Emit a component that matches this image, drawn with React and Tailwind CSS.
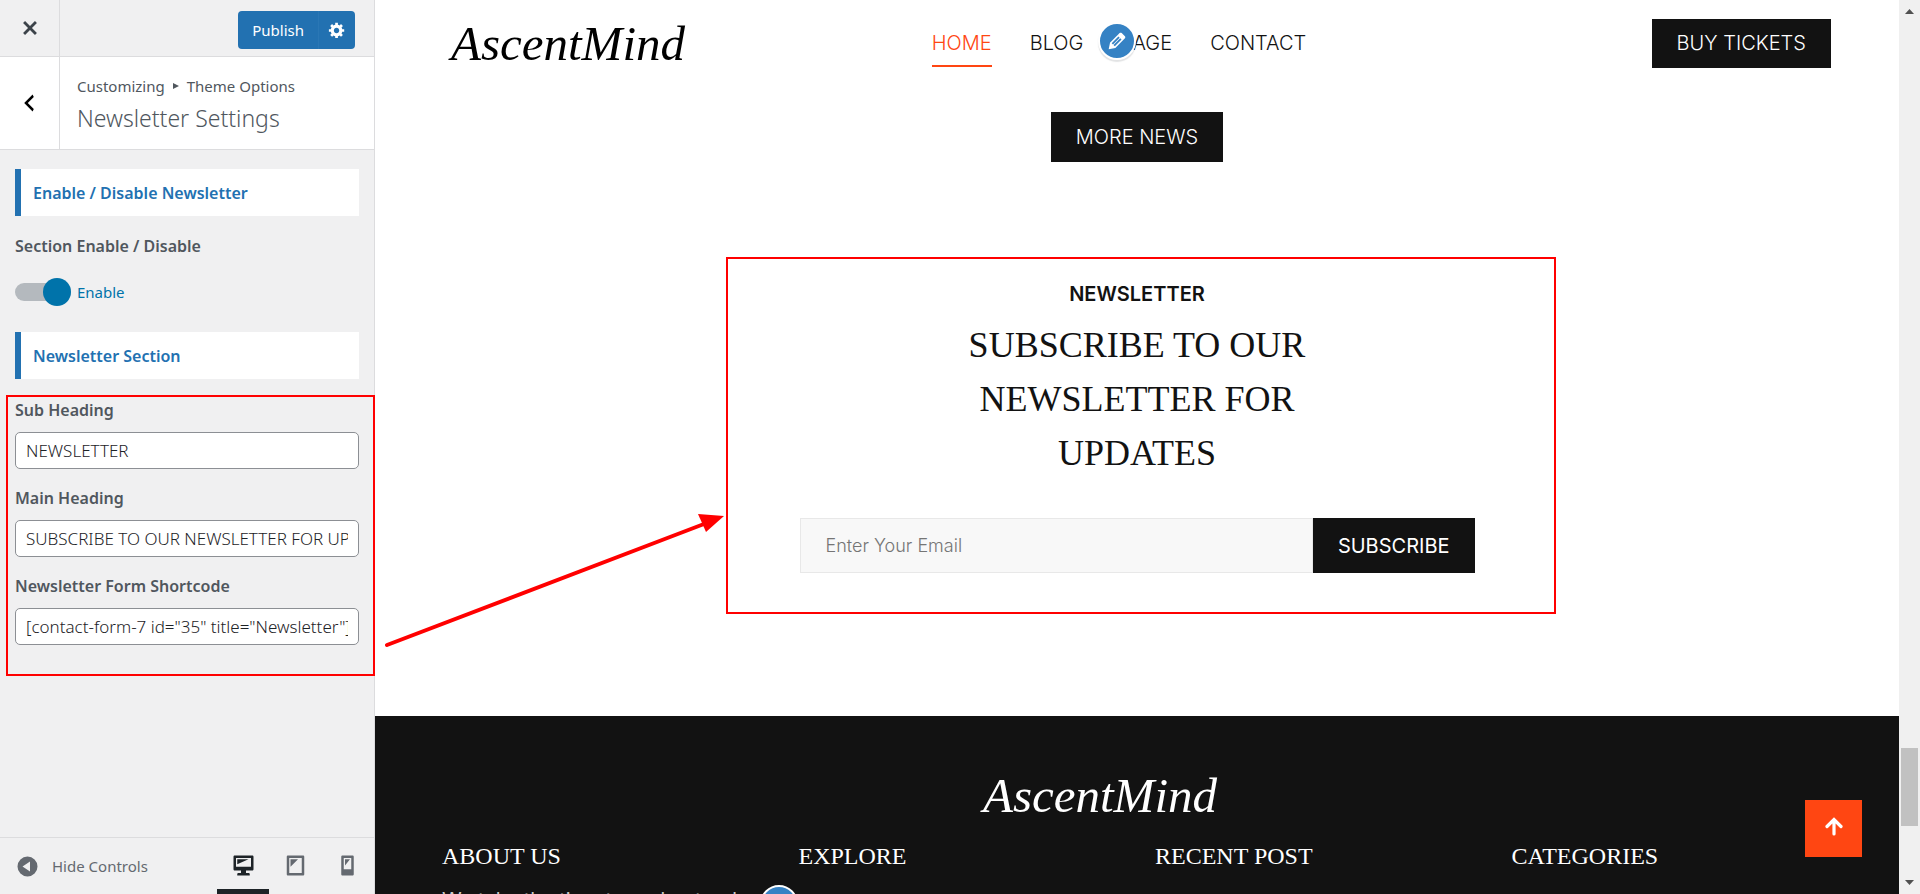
import { useState } from 'react'

const ICONS = {
  close: 'M14.95 6.46L11.41 10l3.54 3.54-1.41 1.41L10 11.42l-3.53 3.53-1.42-1.42L8.58 10 5.05 6.47l1.42-1.42L10 8.58l3.54-3.53z',
  back: 'M14 5l-5 5 5 5-1 2-7-7 7-7z',
  gear: 'M18 12h-2.18c-.17.7-.44 1.35-.81 1.93l1.54 1.54-2.1 2.1-1.54-1.54c-.58.36-1.23.63-1.91.79V19H8v-2.18c-.68-.16-1.33-.43-1.91-.79l-1.54 1.54-2.12-2.12 1.54-1.54c-.36-.58-.63-1.23-.79-1.91H1V9.03h2.17c.16-.7.44-1.35.8-1.94L2.43 5.55l2.1-2.1 1.54 1.54c.58-.37 1.24-.64 1.93-.81V2h3v2.18c.68.16 1.33.43 1.91.79l1.54-1.54 2.12 2.12-1.54 1.54c.36.59.64 1.24.8 1.94H18V12zm-8.5 1.5c1.66 0 3-1.34 3-3s-1.34-3-3-3-3 1.34-3 3 1.34 3 3 3z',
  edit: 'M13.89 3.39l2.71 2.72c.46.46.42 1.24.03 1.64l-8.01 8.02-5.56 1.16 1.16-5.58s7.6-7.63 7.99-8.03c.39-.39 1.22-.39 1.68.07zm-2.73 2.79l-5.59 5.61 1.11 1.11 5.54-5.65zm-2.97 8.23l5.58-5.6-1.07-1.08-5.59 5.6z',
  desktop: 'M3 2h14c.55 0 1 .45 1 1v10c0 .55-.45 1-1 1h-5v2h2c.55 0 1 .45 1 1v1H5v-1c0-.55.45-1 1-1h2v-2H3c-.55 0-1-.45-1-1V3c0-.55.45-1 1-1zm13 9V4H4v7h12zM5 5h9L5 9V5z',
  tablet: 'M4 2h12c.55 0 1 .45 1 1v14c0 .55-.45 1-1 1H4c-.55 0-1-.45-1-1V3c0-.55.45-1 1-1zm11 14V4H5v12h10zM6 5h6l-6 6z',
  mobile: 'M6 2h8c.55 0 1 .45 1 1v14c0 .55-.45 1-1 1H6c-.55 0-1-.45-1-1V3c0-.55.45-1 1-1zm7 11V4H7v9h6zM8 5h4l-4 5z',
  collapse: 'M10 2a8 8 0 1 0 0 16 8 8 0 0 0 0-16zm2 12L6 10l6-4z',
}

const NAV = ['HOME', 'BLOG', 'PAGE', 'CONTACT']
const DEVICES = ['desktop', 'tablet', 'mobile']
const FOOTER_COLUMNS = [
  { title: 'ABOUT US', text: 'We take the time to understand' },
  { title: 'EXPLORE' },
  { title: 'RECENT POST' },
  { title: 'CATEGORIES' },
]

function Icon({ name, className }) {
  return (
    <svg viewBox="0 0 20 20" fill="currentColor" aria-hidden="true" className={className}>
      <path fillRule="evenodd" d={ICONS[name]} />
    </svg>
  )
}

function SectionTitle({ children }) {
  return (
    <h3 className="flex h-[47px] items-center border-l-6 border-[#2271b1] bg-white px-3 text-base font-semibold text-[#2271b1]">
      {children}
    </h3>
  )
}

function Field({ id, label, value, onChange }) {
  return (
    <div className="mb-[15px]">
      <label htmlFor={id} className="mb-2 block text-base leading-7 font-semibold text-[#50575e]">
        {label}
      </label>
      <input
        id={id}
        type="text"
        value={value}
        onChange={(e) => onChange(e.target.value)}
        className="block h-[37px] w-full rounded-[5px] border border-[#8c8f94] bg-white px-2.5 text-[17px] font-light text-[#1d2327]"
      />
    </div>
  )
}

function EditShortcut({ label }) {
  return (
    <button
      aria-label={label}
      className="flex size-[38px] items-center justify-center rounded-full border-2 border-white bg-[#3582c4] text-white shadow-[0_2px_1px_rgba(60,67,74,0.15)]"
    >
      <Icon name="edit" className="size-6" />
    </button>
  )
}

function Sidebar({ settings, update }) {
  const [device, setDevice] = useState('desktop')

  return (
    <aside className="flex w-[375px] shrink-0 flex-col border-r border-[#dcdcde] bg-[#f0f0f1] font-['Noto_Sans','Open_Sans',sans-serif] text-[#50575e]">
      <div className="flex h-[57px] shrink-0 border-b border-[#dcdcde]">
        <button aria-label="Close" className="flex w-[60px] items-center justify-center border-r border-[#dcdcde] text-[#3c434a]">
          <Icon name="close" className="size-7" />
        </button>
        <div className="flex flex-1 items-center justify-end pt-1 pr-[19px]">
          <button className="h-[38px] rounded-l-[4px] bg-[#2271b1] px-3.5 text-[15px] text-white">Publish</button>
          <button aria-label="Publish settings" className="flex h-[38px] w-[37px] items-center justify-center rounded-r-[4px] border-l border-[#2a77b5] bg-[#2271b1] text-white">
            <Icon name="gear" className="size-[18px]" />
          </button>
        </div>
      </div>

      <div className="flex h-[93px] shrink-0 border-b border-[#dcdcde] bg-white">
        <button aria-label="Back" className="flex w-[60px] items-center justify-center border-r border-[#dcdcde] pr-0.5 text-black">
          <Icon name="back" className="size-6" />
        </button>
        <div className="flex flex-col justify-center pt-1.5 pl-[17px]">
          <span className="flex items-center text-[15px] leading-6">
            Customizing
            <svg viewBox="0 0 6 6" className="mx-2 size-1.5" fill="currentColor" aria-hidden="true">
              <path d="M0 0l6 3-6 3z" />
            </svg>
            Theme Options
          </span>
          <h2 className="text-[23px] leading-10 font-light">Newsletter Settings</h2>
        </div>
      </div>

      <div className="flex-1 px-[15px] pt-[19px]">
        <SectionTitle>Enable / Disable Newsletter</SectionTitle>
        <p className="mt-4 text-base leading-7 font-semibold">Section Enable / Disable</p>
        <label className="mt-4 mb-6 flex h-8 cursor-pointer items-center gap-1.5 text-[15px] text-[#0073aa]">
          <input
            type="checkbox"
            className="peer sr-only"
            checked={settings.enabled}
            onChange={(e) => update('enabled', e.target.checked)}
          />
          <span className="flex h-[18px] w-14 items-center justify-start rounded-full bg-[#b4b9be] peer-checked:justify-end">
            <span className="size-7 rounded-full bg-[#0073aa]" />
          </span>
          {settings.enabled ? 'Enable' : 'Disable'}
        </label>
        <SectionTitle>Newsletter Section</SectionTitle>
        <div className="mt-[17px]">
          <Field id="sub-heading" label="Sub Heading" value={settings.subHeading} onChange={(v) => update('subHeading', v)} />
          <Field id="main-heading" label="Main Heading" value={settings.heading} onChange={(v) => update('heading', v)} />
          <Field id="shortcode" label="Newsletter Form Shortcode" value={settings.shortcode} onChange={(v) => update('shortcode', v)} />
        </div>
      </div>

      <div className="flex h-[57px] shrink-0 justify-between border-t border-[#dcdcde] pl-[15px]">
        <button className="flex items-center gap-3 text-[15px] text-[#646970]">
          <Icon name="collapse" className="size-[25px]" />
          Hide Controls
        </button>
        <div className="flex pr-px">
          {DEVICES.map((name) => (
            <button
              key={name}
              aria-label={name}
              onClick={() => setDevice(name)}
              className={`flex w-[52px] items-center justify-center border-b-5 pt-1 ${
                device === name ? 'border-[#1d2327] text-[#1d2327]' : 'border-transparent text-[#646970]'
              }`}
            >
              <Icon name={name} className="size-[25px]" />
            </button>
          ))}
        </div>
      </div>
    </aside>
  )
}

function Preview({ settings }) {
  return (
    <main className="relative flex min-w-0 flex-1 flex-col bg-white font-['Inter',sans-serif] text-xl font-light text-[#121212]">
      <div className="mx-auto w-full max-w-[1388px]">
        <header className="flex h-[86px] items-center justify-between">
          <a href="#home" className="w-[264px] pl-2 font-['Liberation_Serif',serif] text-[49px] leading-none font-normal text-black italic">
            AscentMind
          </a>
          <nav className="flex gap-[38px]">
            {NAV.map((item) => (
              <a
                key={item}
                href={`#${item.toLowerCase()}`}
                className={`border-b-2 pt-2.5 pb-2 leading-7 ${
                  item === 'HOME' ? 'border-[#ff4612] text-[#ff4612]' : 'border-transparent'
                }`}
              >
                {item}
              </a>
            ))}
          </nav>
          <div className="flex w-[300px] justify-end">
            <button className="h-[49px] bg-[#121212] px-[25px] text-white">BUY TICKETS</button>
          </div>
        </header>
      </div>
      <div className="absolute top-[22px] left-[723px]">
        <EditShortcut label="Edit menu" />
      </div>

      <div className="mt-[26px] flex justify-center">
        <button className="h-[50px] bg-[#121212] px-[25px] text-white">MORE NEWS</button>
      </div>

      <section className="mx-auto mt-[118px] w-[675px] text-center">
        <h4 className="leading-7 font-semibold">{settings.subHeading}</h4>
        <h2 className="mx-auto mt-2.5 max-w-[360px] font-['Liberation_Serif',serif] text-[36px] leading-[54px] font-normal">
          {settings.heading}
        </h2>
        <form className="mt-[38px] flex h-[55px]" onSubmit={(e) => e.preventDefault()}>
          <input
            type="email"
            aria-label="Email"
            placeholder="Enter Your Email"
            className="min-w-0 flex-1 border border-[#e8e8e8] bg-[#f8f8f8] px-[25px] text-lg placeholder:text-[#757575]"
          />
          <button className="bg-[#121212] px-[25px] font-normal text-white">SUBSCRIBE</button>
        </form>
      </section>

      <footer className="relative mt-[143px] flex-1 bg-[#121212] text-white">
        <div className="mx-auto max-w-[1426px] pt-[55px]">
          <a href="#home" className="block pr-[74px] text-center font-['Liberation_Serif',serif] text-[49px] leading-none font-normal italic">
            AscentMind
          </a>
          <div className="mt-5 grid grid-cols-4">
            {FOOTER_COLUMNS.map((col) => (
              <div key={col.title} className="px-[18px]">
                <h3 className="font-['Liberation_Serif',serif] text-2xl leading-8 font-normal">{col.title}</h3>
                {col.text && <p className="mt-3.5 font-normal whitespace-nowrap text-[#cccccc]">{col.text}</p>}
              </div>
            ))}
          </div>
        </div>
        <div className="absolute top-[169px] left-[385px]">
          <EditShortcut label="Edit widget" />
        </div>
        <button aria-label="Back to top" className="absolute top-[84px] right-[37px] flex size-[57px] items-center justify-center bg-[#ff4612]">
          <svg viewBox="0 0 18 19" className="mb-1 h-[19px] w-[18px]" fill="none" stroke="currentColor" strokeWidth="3.2" strokeLinecap="round" aria-hidden="true">
            <path d="M2 9.500L9 2.500l7 7M9 3V17" />
          </svg>
        </button>
      </footer>
    </main>
  )
}

function Scrollbar() {
  return (
    <div className="flex w-[21px] shrink-0 flex-col items-center bg-[#f0f0f0] py-[9px]" aria-hidden="true">
      <svg viewBox="0 0 9 5" className="h-[5px] w-[9px]" fill="#505050">
        <path d="M0 5L4.500 0 9 5z" />
      </svg>
      <div className="flex-[734]" />
      <div className="h-[78px] w-[17px] bg-[#c1c1c1]" />
      <div className="flex-[54]" />
      <svg viewBox="0 0 9 5" className="h-[5px] w-[9px]" fill="#505050">
        <path d="M0 0h9L4.500 5z" />
      </svg>
    </div>
  )
}

// Highlight frames and the arrow from the settings to the section they control
function Annotations() {
  return (
    <div className="pointer-events-none absolute inset-0">
      <div className="absolute top-[395px] left-[6px] h-[281px] w-[369px] border-2 border-[#ff0000]" />
      <div className="absolute top-[257px] left-[726px] h-[357px] w-[830px] border-2 border-[#ff0000]" />
      <svg viewBox="0 0 350 140" className="absolute top-[510px] left-[380px] h-[140px] w-[350px]" fill="#ff0000" aria-hidden="true">
        <path d="M7 135L324 14" stroke="#ff0000" strokeWidth="4" strokeLinecap="round" />
        <path d="M344 6L318 4l8 18z" />
      </svg>
    </div>
  )
}

export default function App() {
  const [settings, setSettings] = useState({
    enabled: true,
    subHeading: 'NEWSLETTER',
    heading: 'SUBSCRIBE TO OUR NEWSLETTER FOR UPDATES',
    shortcode: '[contact-form-7 id="35" title="Newsletter"]',
  })

  const update = (key, value) => setSettings((prev) => ({ ...prev, [key]: value }))

  return (
    <div className="relative flex h-screen overflow-hidden">
      <Sidebar settings={settings} update={update} />
      <Preview settings={settings} />
      <Scrollbar />
      <Annotations />
    </div>
  )
}
